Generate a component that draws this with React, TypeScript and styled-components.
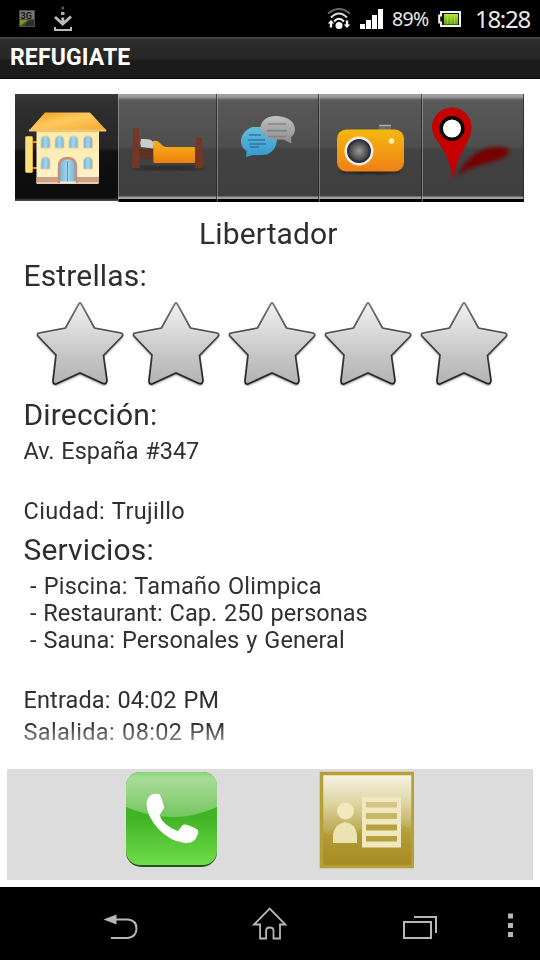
import React from "react";
import styled, { createGlobalStyle } from "styled-components";

const GlobalStyle = createGlobalStyle`
  * { box-sizing: border-box; }
  body { margin: 0; background: #fff; font-family: Roboto, sans-serif; color: #303030; }
  svg { display: block; flex: none; }
`;

const Screen = styled.div`
  display: flex;
  flex-direction: column;
  width: 540px;
  height: 960px;
  overflow: hidden;
  background: #fefefe;
`;

const StatusBar = styled.header`
  display: flex;
  justify-content: space-between;
  height: 37px;
  background: #000;
`;

const StatusGroup = styled.div`
  display: flex;
  align-items: center;
`;

const StatusText = styled.span<{ $size: number; $width: number; $spacing: number }>`
  width: ${(p) => p.$width}px;
  font-family: "Noto Sans", sans-serif;
  font-size: ${(p) => p.$size}px;
  line-height: 37px;
  letter-spacing: ${(p) => p.$spacing}px;
  white-space: nowrap;
  color: #e8e8e8;
`;

const TitleBar = styled.div`
  height: 42px;
  padding-left: 10px;
  border-top: 2px solid #414141;
  border-bottom: 1px solid #0c0c0c;
  background: linear-gradient(#2c2c2c 0, #272727 50%, #1c1c1c 54%, #1b1b1b 100%);
  color: #fff;
  font-size: 23px;
  font-weight: 700;
  line-height: 38px;
  letter-spacing: 0.12px;
`;

const Main = styled.main`
  display: flex;
  flex-direction: column;
  height: 808px;
  padding: 15px 7px 7px;
`;

const Tabs = styled.nav`
  display: flex;
  height: 108px;
  margin: 0 9px 0 8px;
`;

const Tab = styled.div<{ $width: number; $active?: boolean }>`
  width: ${(p) => p.$width}px;
  height: ${(p) => (p.$active ? 107 : 108)}px;
  background: ${(p) =>
    p.$active
      ? "linear-gradient(#3a3a3a 0, #303030 8%, #262626 50%, #121212 54%, #0c0c0c 97%, #555 100%)"
      : "linear-gradient(#a5a5a5 0, #9a9a9a 3px, #5c5c5c 6px, #575757 12px, #4e4e4e 52px, #424242 56px, #3f3f3f 102px, #999 103px, #a5a5a5 105px, #000 105px)"};
  ${(p) => !p.$active && "box-shadow: inset 1px 0 rgba(190,190,190,0.45), inset -1px 0 rgba(35,35,35,0.7);"}
`;

const Details = styled.section`
  display: flex;
  flex-direction: column;
  height: 567px;
  padding: 14px 17px 0;
  overflow: hidden;
  mask-image: linear-gradient(#000 0, #000 522px, rgba(0, 0, 0, 0.5) 542px, transparent 552px);
`;

const Heading = styled.h2<{ $gap: number; $center?: boolean; $spacing: number }>`
  flex: none;
  margin: ${(p) => p.$gap}px 0 0;
  padding-right: ${(p) => (p.$center ? 3 : 0)}px;
  height: 36px;
  font-size: 30px;
  font-weight: 400;
  line-height: 36px;
  letter-spacing: ${(p) => p.$spacing}px;
  text-indent: -0.5px;
  text-align: ${(p) => (p.$center ? "center" : "left")};
  color: #2e2e2e;
`;

const Line = styled.p<{ $gap?: number; $spacing: number; $indent?: boolean }>`
  flex: none;
  margin: ${(p) => p.$gap ?? 0}px 0 0;
  padding-left: ${(p) => (p.$indent ? 6.5 : 0)}px;
  height: 27px;
  font-size: 23.5px;
  line-height: 27px;
  letter-spacing: ${(p) => p.$spacing}px;
  word-spacing: 1px;
  text-indent: -0.5px;
  white-space: pre;
`;

const Stars = styled.div`
  display: flex;
  flex: none;
  height: 102px;
  padding-left: 8px;
`;

const Actions = styled.footer`
  display: flex;
  height: 111px;
  padding: 2px 0 0 117px;
  gap: 98px;
  background: #dcdcdc;
`;

const NavBar = styled.nav`
  display: flex;
  height: 73px;
  background: #000;
`;

const SignalIcons = () => (
  <svg width="80" height="37" viewBox="0 0 80 37">
    <rect x="19" y="10" width="16" height="17" fill="#4b4b4b" />
    <rect x="20" y="11" width="14" height="8" fill="#777" />
    <text x="20.5" y="18.5" fontSize="9" fontWeight="700" fontFamily="Roboto, sans-serif" fill="#161616">3G</text>
    <path d="M20 20H28L20 26Z" fill="#78951e" />
    <path d="M29 20H34V26H24Z" fill="#263223" />
    <path d="M61.500 6.500h2.500v3h-2.500z" fill="#555" />
    <path d="M61 12h3.500v3H61z" fill="#aaa" />
    <path d="M55 17L62.700 24L71 16.500M62.800 17.500V24" fill="none" stroke="#bbb" strokeWidth="2.800" />
    <path d="M55 27V30H71V27" fill="none" stroke="#bbb" strokeWidth="2" />
  </svg>
);

const NetworkIcons = () => (
  <svg width="65" height="37" viewBox="327 0 65 37">
    <g fill="none" strokeWidth="2">
      <path d="M328 13.500Q339 4.500 350 13.500" stroke="#666" />
      <path d="M331 17.500Q339 9.500 347 17.500" stroke="#ddd" />
      <path d="M334 21.500Q339 16 344 21.500" stroke="#fff" />
    </g>
    <circle cx="339" cy="25.500" r="3.500" fill="#fff" />
    <path d="M331 20l3.200 3.500h-2v4h-2.400v-4h-2zM347 28l-3.200-3.500h2v-4h2.400v4h2z" fill="#fff" />
    <path d="M360 24h5v5h-5zM366 20h5v9h-5zM372 15h5v14h-5zM378 9h5v20h-5z" fill="#fff" />
  </svg>
);

const BatteryIcon = () => (
  <svg width="45" height="37" viewBox="430 0 45 37">
    <defs>
      <linearGradient id="battery" x1="0" x2="0" y1="0" y2="1">
        <stop stopColor="#b6e23b" /><stop offset="1" stopColor="#5fa313" />
      </linearGradient>
    </defs>
    <path d="M441 12h19v14h-19v-3.500h-1.800v-7h1.800z" fill="#151515" stroke="#f4f4f4" strokeWidth="2" />
    <rect x="444" y="14" width="14" height="10.500" fill="url(#battery)" />
    <path d="M447.500 14v10M451 14v10M454.500 14v10" stroke="#d9ff61" strokeWidth=".7" opacity=".5" />
  </svg>
);

const HotelIcon = () => (
  <svg width="103" height="107" viewBox="15 94 103 107">
    <defs>
      <linearGradient id="roof" x1="0" x2="1" y1="0" y2="1">
        <stop stopColor="#ee9d19" /><stop offset=".45" stopColor="#ffc95f" /><stop offset="1" stopColor="#f5a62a" />
      </linearGradient>
      <linearGradient id="wall" x1="0" x2="0" y1="0" y2="1">
        <stop stopColor="#fce9a6" /><stop offset="1" stopColor="#fff3cb" />
      </linearGradient>
      <linearGradient id="glass"><stop stopColor="#6fb2d6" /><stop offset=".5" stopColor="#a5d5ec" /><stop offset="1" stopColor="#74b1d4" /></linearGradient>
      <filter id="hotelSoft"><feGaussianBlur stdDeviation=".7" /></filter>
    </defs>
    <g filter="url(#hotelSoft)">
      <path d="M30 142h8M30 168h8" stroke="#d69a21" strokeWidth="2" />
      <rect x="25.500" y="136.500" width="7" height="36" rx="1" fill="#ffdf7c" stroke="#e6ac37" />
      <rect x="36.500" y="126" width="62.500" height="57" fill="url(#wall)" />
      <path d="M37 131h62" stroke="#d6af63" strokeWidth="2" opacity=".5" />
      <path d="M36.500 177h22v6h-22zM76 177h23v6H76z" fill="#cda185" />
      <path d="M36.500 183h62" stroke="#efc8ad" strokeWidth="2" />
      <path d="M45 112.500H90L107 131H28.500Z" fill="url(#roof)" />
      <path d="M29 130.500h77" stroke="#f0c474" strokeWidth="2" />
      <g fill="url(#glass)" stroke="#e5cd94" strokeWidth="1">
        {[[41, 136], [55, 136], [69, 136], [83.5, 136], [41, 157], [83.5, 157]].map(([x, y]) => (
          <path key={`${x}-${y}`} d={`M${x} ${y + 12}v-7q0-5 4.500-5t4.500 5v7z`} />
        ))}
      </g>
      <path d="M59 183v-16q0-9 8.500-9t8.500 9v16" fill="url(#glass)" stroke="#c28f79" strokeWidth="2.500" />
      <path d="M67.500 161v22" stroke="#4a9dcc" />
      <path d="M60 182.500h16" stroke="#eeeadc" strokeWidth="2" />
    </g>
  </svg>
);

const BedIcon = () => (
  <svg width="99" height="108" viewBox="118 94 99 108">
    <defs>
      <linearGradient id="quilt" x1="0" x2="0" y1="0" y2="1"><stop stopColor="#f8b31a" /><stop offset="1" stopColor="#ed810d" /></linearGradient>
      <filter id="bedShadow"><feGaussianBlur stdDeviation="2" /></filter>
    </defs>
    <ellipse cx="168" cy="168" rx="38" ry="2" fill="#242424" filter="url(#bedShadow)" />
    <path d="M139 149h56v10h-56z" fill="#5f3024" />
    <path d="M133 129q3-1.500 6 0l.8 39h-7.500zM196 138q3-1.500 6 0l1 30h-8z" fill="#753624" />
    <path d="M141 139q6-.5 10 1l3 3-1 5.500-12-1.500q-1.500-4 0-8z" fill="#ccc" />
    <path d="M153 141q4-1 7 2 3 4 7 4h27q1 0 1 1v14q0 1-1 1h-39q-1.500 0-1.500-1z" fill="url(#quilt)" />
  </svg>
);

const ChatIcon = () => (
  <svg width="102" height="108" viewBox="217 94 102 108">
    <defs>
      <linearGradient id="blueChat" x1="0" x2="0" y1="0" y2="1"><stop stopColor="#67bbde" /><stop offset="1" stopColor="#3499cc" /></linearGradient>
      <linearGradient id="grayChat" x1="0" x2="0" y1="0" y2="1"><stop stopColor="#c0c0c0" /><stop offset="1" stopColor="#8b8b8b" /></linearGradient>
      <filter id="chatSoft"><feGaussianBlur stdDeviation=".5" /></filter>
    </defs>
    <g filter="url(#chatSoft)">
      <path d="M252 127h15q10 2 10 13-1 10-9 14-3 1.500-15 1l-7 2 .5-6q-6-4-5.500-11 1-9 11-13z" fill="url(#blueChat)" />
      <path d="M249 135h12M248 140h17M249 144h17M250 147h9" stroke="#287ba2" strokeWidth="1.300" />
      <path d="M274 116h4q16 2 17 13 0 5-4 8l.5 6.500-8-4h-8q-13-1-15-12 1-10 13.500-11.500z" fill="url(#grayChat)" />
      <path d="M268 124h18M267 130.500h20M268 136.500h18" stroke="#858585" strokeWidth="1.600" />
      <path d="M267 131.500h20" stroke="#6d98a9" />
    </g>
  </svg>
);

const CameraIcon = () => (
  <svg width="103" height="108" viewBox="319 94 103 108">
    <defs>
      <linearGradient id="camera" x1="0" x2="0" y1="0" y2="1"><stop stopColor="#f4b90e" /><stop offset="1" stopColor="#ef7f19" /></linearGradient>
      <radialGradient id="lens"><stop stopColor="#999" /><stop offset=".55" stopColor="#626262" /><stop offset="1" stopColor="#363636" /></radialGradient>
      <filter id="cameraShadow"><feGaussianBlur stdDeviation="1.800" /></filter>
    </defs>
    <ellipse cx="370" cy="171.500" rx="31" ry="2.500" fill="#202020" filter="url(#cameraShadow)" />
    <path d="M378 130l2-5h11v5" fill="#6b6b6b" />
    <path d="M379 125.500h12" stroke="#aaa" strokeWidth="1.500" />
    <rect x="337" y="129.500" width="67" height="42" rx="9" fill="url(#camera)" />
    <circle cx="359" cy="151" r="14.500" fill="#f2eddd" />
    <circle cx="359" cy="151" r="11" fill="url(#lens)" stroke="#27304a" strokeWidth="2" />
    <circle cx="391.500" cy="141" r="2.800" fill="#fff0b6" />
  </svg>
);

const PinIcon = () => (
  <svg width="103" height="108" viewBox="422 94 103 108">
    <defs><filter id="pinShadow"><feGaussianBlur stdDeviation="2" /></filter></defs>
    <path d="M456 176Q470 153 488 148q20-3 21 3t-24 13q-15 3-29 12z" fill="#760606" filter="url(#pinShadow)" />
    <path d="M452 107.500c11 0 19.500 9 19.500 20 0 8-4 14-8 22-5 9-8 17-10.500 31-2-14-5-22-10-31-5-8-11-14-11-22 0-11 9-20 20-20z" fill="#c40000" />
    <circle cx="452" cy="128.500" r="10.800" fill="#fff" stroke="#080505" strokeWidth="3.500" />
  </svg>
);

const StarIcon = ({ id }: { id: string }) => (
  <svg width="96" height="102" viewBox="32 293.500 96 102">
    <defs>
      <linearGradient id={id} x1="0" x2="0" y1="0" y2="1"><stop stopColor="#f3f3f3" /><stop offset=".5" stopColor="#cfcfcf" /><stop offset="1" stopColor="#b2b2b2" /></linearGradient>
      <linearGradient id={`${id}-edge`} x1="0" x2="0" y1="0" y2="1"><stop stopColor="#777" /><stop offset=".4" stopColor="#484848" /><stop offset="1" stopColor="#202020" /></linearGradient>
      <filter id={`${id}-shadow`} x="-10%" y="-10%" width="120%" height="120%"><feGaussianBlur stdDeviation="1" /></filter>
    </defs>
    <path transform="translate(0 1.500)" d="M79 303Q80 301.500 81 303L94.500 327.500L121 332.500Q124 334 122 336L103.500 355L107 380Q106.500 384 103 383L80 372.500L56 383.500Q53 384 53 380L56 354.500L38 335.500Q36.500 333 39 332.500L65.500 327.500Z" fill="#777" filter={`url(#${id}-shadow)`} />
    <path d="M79 303Q80 301.500 81 303L94.500 327.500L121 332.500Q124 334 122 336L103.500 355L107 380Q106.500 384 103 383L80 372.500L56 383.500Q53 384 53 380L56 354.500L38 335.500Q36.500 333 39 332.500L65.500 327.500Z" fill={`url(#${id})`} stroke={`url(#${id}-edge)`} strokeWidth="1.700" />
  </svg>
);

const CallIcon = () => (
  <svg width="96" height="99" viewBox="124 771 96 99">
    <defs>
      <linearGradient id="call" x1="0" x2="0" y1="0" y2="1"><stop stopColor="#39af20" /><stop offset=".5" stopColor="#42b526" /><stop offset="1" stopColor="#6fdc4b" /></linearGradient>
      <linearGradient id="callGloss" x1="0" x2="0" y1="0" y2="1"><stop stopColor="#87d773" /><stop offset=".15" stopColor="#a9dc99" /><stop offset="1" stopColor="#75c660" /></linearGradient>
      <clipPath id="callShape"><rect x="126" y="772" width="91" height="93" rx="14" /></clipPath>
    </defs>
    <rect x="126" y="774" width="91" height="93" rx="15" fill="#25521f" />
    <rect x="126" y="772" width="91" height="93" rx="14" fill="url(#call)" />
    <path clipPath="url(#callShape)" d="M126 772h91v35q-44 20-91 0z" fill="url(#callGloss)" />
    <path d="M151 795q2-2 8-1 2 1 5 13 0 2-4.500 8 3 10 18 16 2-1 5-6 3-2 14 4 3 2 1 6-3 9-13 8-15-2-26-14-12-13-12-26 1-6 4.500-8z" fill="#fff" />
  </svg>
);

const ContactIcon = () => (
  <svg width="96" height="99" viewBox="318 771 96 99">
    <defs>
      <linearGradient id="card" x1="0" x2="0" y1="0" y2="1"><stop stopColor="#f8f4e7" /><stop offset=".3" stopColor="#e0d7a7" /><stop offset=".65" stopColor="#b8a448" /><stop offset="1" stopColor="#a58c25" /></linearGradient>
    </defs>
    <rect x="321.500" y="773.500" width="91.500" height="93" fill="url(#card)" stroke="#b5a037" strokeWidth="3.500" />
    <path d="M323.500 832q16 8 39-3 26-10 48-1v37h-87z" fill="#a88818" opacity=".3" />
    <circle cx="345.500" cy="811" r="8.500" fill="#f0e8bf" />
    <path d="M333 843v-9q3-11 12-12 10 1 12 12v9z" fill="#ece3b3" />
    <rect x="362" y="797" width="39" height="50.500" fill="#f0e8c0" />
    <path d="M366 802h31v5.500h-31z" fill="#d3c686" />
    <path d="M366 813h31v6h-31z" fill="#c8b967" />
    <path d="M366 824.500h31v6h-31zM366 836h31v5.500h-31z" fill="#b8a140" />
  </svg>
);

const NavigationIcons = () => (
  <svg width="540" height="73" viewBox="0 887 540 73" fill="none" stroke="#b7b7b7" strokeWidth="2">
    <path d="M116 919.500h12q8.500 1 8.500 9t-8.500 9.500h-17" />
    <path d="M103.500 919.500l13-5v10z" fill="#b7b7b7" stroke="none" />
    <path d="M254 924.500l15.700-16 15.700 16H280v14h-6.500v-8q0-3-3.700-3t-3.700 3v8h-6v-14z" strokeWidth="1.800" />
    <path d="M404 922h27v16h-27zM414 917h22v16" />
    <path d="M508 913.500h5v5h-5zM508 923h5v5h-5zM508 932h5v5h-5z" fill="#b7b7b7" stroke="none" />
  </svg>
);

export default function App() {
  return (
    <Screen>
      <GlobalStyle />
      <StatusBar>
        <StatusGroup><SignalIcons /></StatusGroup>
        <StatusGroup>
          <NetworkIcons />
          <StatusText $size={19.5} $width={38} $spacing={-0.6}>89%</StatusText>
          <BatteryIcon />
          <StatusText $size={24} $width={65} $spacing={-1.3}>18:28</StatusText>
        </StatusGroup>
      </StatusBar>
      <TitleBar>REFUGIATE</TitleBar>
      <Main>
        <Tabs>
          <Tab $width={103} $active><HotelIcon /></Tab>
          <Tab $width={99}><BedIcon /></Tab>
          <Tab $width={102}><ChatIcon /></Tab>
          <Tab $width={103}><CameraIcon /></Tab>
          <Tab $width={102}><PinIcon /></Tab>
        </Tabs>
        <Details>
          <Heading $gap={0} $center $spacing={0.1}>Libertador</Heading>
          <Heading $gap={6} $spacing={0.15}>Estrellas:</Heading>
          <Stars>
            {["s1", "s2", "s3", "s4", "s5"].map((id) => <StarIcon key={id} id={id} />)}
          </Stars>
          <Heading $gap={1} $spacing={0.15}>Dirección:</Heading>
          <Line $gap={5} $spacing={-0.02}>Av. España #347</Line>
          <Line $gap={33} $spacing={0.38}>Ciudad: Trujillo</Line>
          <Heading $gap={7} $spacing={0.15}>Servicios:</Heading>
          <Line $gap={5} $indent $spacing={0.22}>- Piscina: Tamaño Olimpica</Line>
          <Line $indent $spacing={0.02}>- Restaurant: Cap. 250 personas</Line>
          <Line $indent $spacing={0.07}>- Sauna: Personales y General</Line>
          <Line $gap={33} $spacing={0.12}>Entrada: 04:02 PM</Line>
          <Line $gap={5} $spacing={0.34}>Salalida: 08:02 PM</Line>
        </Details>
        <Actions><CallIcon /><ContactIcon /></Actions>
      </Main>
      <NavBar><NavigationIcons /></NavBar>
    </Screen>
  );
}
